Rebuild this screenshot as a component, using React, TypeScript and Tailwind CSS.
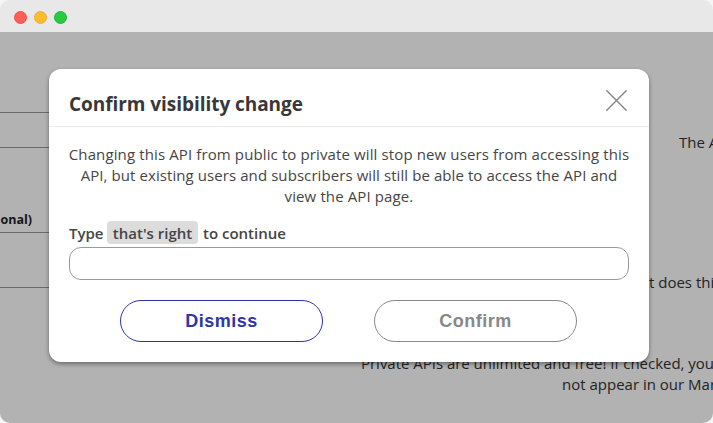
import React from "react";

function Copy({ className = "", children }: { className?: string; children: React.ReactNode }) {
  return <span className={`block whitespace-nowrap ${className}`}>{children}</span>;
}

function TitleBar() {
  return (
    <header className="flex h-8 items-center gap-2 bg-[#e8e8e8] pt-0.5 pl-[13.5px]">
      <span className="size-[13px] rounded-full border border-[#f34e4a] bg-[#ff5f57]" />
      <span className="-ml-px size-[13px] rounded-full border border-[#eeaa35] bg-[#ffbd2e]" />
      <span className="-ml-px size-[13px] rounded-full border border-[#1fb53a] bg-[#28ca42]" />
    </header>
  );
}

function Page() {
  return (
    <div className="flex h-[391px] bg-[#b2b2b2] text-[15px] leading-[21px] text-[#232323]">
      <div className="w-[200px] pt-20">
        <div className="h-9 border-y border-[#6a6a6a]" />
        <div className="flex h-[84px] w-8 items-end justify-end pb-[2px] text-[12.5px] font-bold whitespace-nowrap text-[#17151b]">
          (optional)
        </div>
        <div className="h-14 border-y border-[#6a6a6a]" />
      </div>
      <div className="w-[513px] overflow-hidden pt-[100px]">
        <Copy className="pl-[479px]">The API</Copy>
        <Copy className="pt-[119px] pl-[449px]">t does this</Copy>
        <Copy className="pt-[60px] pl-[161px] tracking-[-0.02px]">Private APIs are unlimited and free! If checked, your</Copy>
        <Copy className="pl-[362px]">not appear in our Marketplace</Copy>
      </div>
    </div>
  );
}

function Modal() {
  return (
    <section
      role="dialog"
      className="absolute top-[69px] left-[49px] flex h-[293px] w-[600px] flex-col rounded-xl bg-white text-[#3a3a3a] shadow-[0_2px_4px_rgba(0,0,0,0.4)]"
    >
      <div className="flex h-[58px] items-center justify-between border-b border-[#ececec] pr-[22px] pl-5 pt-[10px]">
        <h1 className="pt-0.5 text-[19px] leading-7 font-bold tracking-[-0.05px] whitespace-nowrap text-[#383838]">Confirm visibility change</h1>
        <button aria-label="Close" className="mb-1">
          <svg width="21" height="21" viewBox="0 0 21 21" stroke="#858585" strokeWidth="1.4" strokeLinecap="round">
            <path d="M.8.8 20.2 20.2M20.2.8.8 20.2" />
          </svg>
        </button>
      </div>
      <p className="flex flex-col items-center pt-[17px] text-[15px] leading-[21px] tracking-[0.12px] text-[#454545]">
        <Copy>Changing this API from public to private will stop new users from accessing this</Copy>
        <Copy className="tracking-[0.08px]">API, but existing users and subscribers will still be able to access the API and</Copy>
        <Copy>view the API page.</Copy>
      </p>
      <div className="mt-[14px] flex h-[23px] items-center pl-5 text-[15px] font-semibold whitespace-nowrap text-[#454545]">
        <span className="w-[38px] pt-px">Type</span>
        <span className="flex h-[23px] w-[91px] items-center justify-center rounded bg-[#dcdcdc] pt-px">that&apos;s right</span>
        <span className="ml-[5px] pt-px">to continue</span>
      </div>
      <input className="mx-5 mt-[3px] h-[33px] rounded-xl border border-[#999] px-3 outline-none" />
      <div className="mt-5 flex gap-[51px] pl-[71px] font-['Liberation_Sans',Arial,sans-serif] text-lg font-bold tracking-[0.5px]">
        <button className="h-[42px] w-[203px] rounded-full border border-[#2e35a8] text-[#2e35a8]">Dismiss</button>
        <button className="h-[42px] w-[203px] rounded-full border border-[#888] text-[#888]">Confirm</button>
      </div>
    </section>
  );
}

export default function App() {
  return (
    <div className="h-[423px] w-[713px] bg-[#f5f5f5]">
      <main className="relative h-[423px] w-[713px] overflow-hidden rounded-[10px] font-['Open_Sans','Noto_Sans',sans-serif]">
        <TitleBar />
        <Page />
        <Modal />
      </main>
    </div>
  );
}
